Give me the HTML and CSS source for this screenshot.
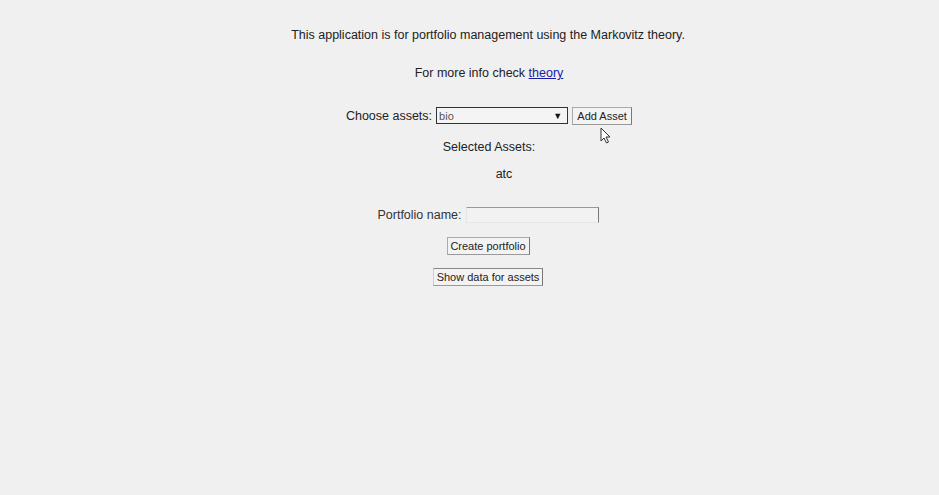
FILE: index.html
```html
<!DOCTYPE html>
<html>
<head>
<meta charset="utf-8">
<link rel="stylesheet" href="styles.css">
</head>
<body>
<div class="page">
  <div class="line intro">This application is for portfolio management using the Markovitz theory.</div>
  <div class="line info">For more info check <a href="#">theory</a></div>
  <div class="row choose">
    <span class="label">Choose assets:</span>
    <span class="select"><span class="sel-text">bio</span><span class="arrow">▼</span></span>
    <button class="btn add">Add Asset</button>
  </div>
  <div class="line selected">Selected Assets:</div>
  <div class="line asset">atc</div>
  <div class="row pname">
    <span class="label">Portfolio name:</span>
    <span class="input"></span>
  </div>
  <button class="btn create">Create portfolio</button>
  <button class="btn show">Show data for assets</button>
</div>
<svg class="cursor" width="12" height="18" viewBox="0 0 12 18"><path d="M1 1 L1 14 L4 11 L6.5 16 L8.5 15 L6 10 L10 10 Z" fill="#fff" stroke="#333" stroke-width="1"/></svg>
</body>
</html>
```
FILE: styles.css
```css
html, body {
  margin: 0;
  padding: 0;
  background: #f0f0f0;
}
body {
  font-family: "Liberation Sans", Arial, sans-serif;
  font-size: 12.5px;
  color: #222;
  width: 939px;
  height: 495px;
  overflow: hidden;
  position: relative;
}
.page {
  display: flex;
  flex-direction: column;
  align-items: center;
  padding-top: 27px;
  padding-left: 37px;
}
.line {
  height: 14px;
  line-height: 14px;
  white-space: nowrap;
}
.intro { padding-top: 1px; }
.info { margin-top: 24px; padding-left: 2px; }
.info a { color: #1a1aa6; text-decoration: underline; }
.row {
  display: flex;
  align-items: center;
}
.choose { margin-top: 27px; height: 17px; padding-left: 2px; }
.choose .label { margin-right: 4px; }
.select {
  box-sizing: border-box;
  width: 132px;
  height: 17px;
  border: 1px solid #333;
  background: #f4f4f4;
  display: flex;
  align-items: center;
  justify-content: space-between;
  font-size: 11px;
  color: #555;
  padding: 0 5px 0 2px;
}
.arrow { font-size: 9px; color: #111; }
.btn {
  font-family: "Liberation Sans", Arial, sans-serif;
  font-size: 11px;
  color: #222;
  background: #f3f3f3;
  border: 1px solid #aaa;
  border-right-color: #777;
  border-bottom-color: #999;
  padding: 0;
  margin: 0;
  height: 18px;
  line-height: 16px;
}
.add { margin-left: 4px; width: 60px; }
.selected { margin-top: 16px; padding-left: 2px; }
.asset { margin-top: 13px; padding-left: 32px; }
.pname { margin-top: 26px; height: 16px; }
.pname .label { margin-right: 4px; color: #333; }
.input {
  box-sizing: border-box;
  width: 133px;
  height: 16px;
  border-top: 1px solid #999;
  border-right: 1px solid #777;
  border-left: 1px solid #e6e6e6;
  border-bottom: 1px solid #e6e6e6;
  background: #f2f2f2;
}
.create { margin-top: 14px; width: 83px; }
.show {
  margin-top: 13px;
  width: 110px;
  border-top-color: #888;
  border-left-color: #ccc;
}
.cursor {
  position: absolute;
  left: 600px;
  top: 127px;
}
```
